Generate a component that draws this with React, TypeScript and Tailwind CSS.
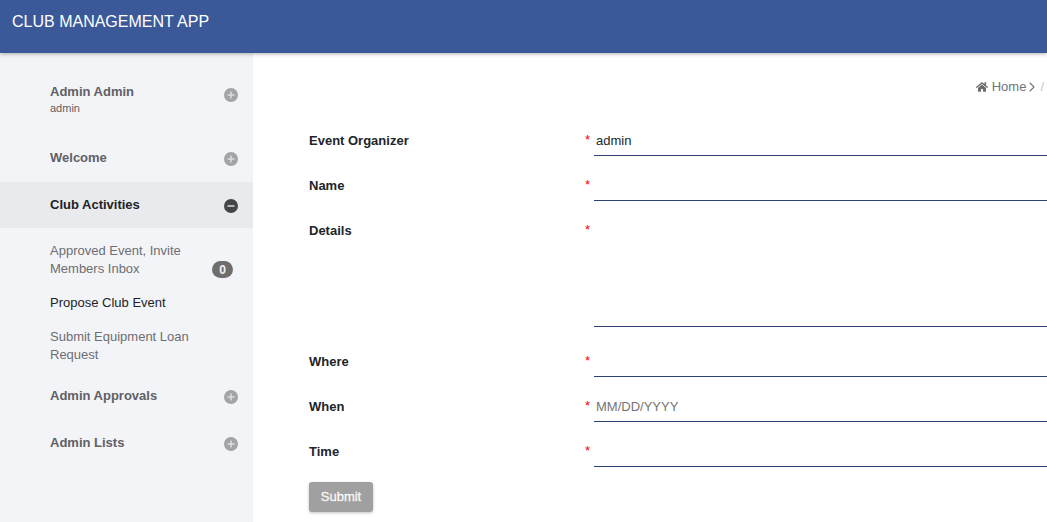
import { ChevronRight } from "lucide-react";
import { FaHome } from "react-icons/fa";

function Bullet({ open = false }: { open?: boolean }) {
  return (
    <span className={`flex h-[14px] w-[14px] shrink-0 items-center justify-center rounded-full ${open ? "bg-[#444548]" : "bg-[#a3a4a7]"}`}>
      <svg width="8" height="8" viewBox="0 0 8 8" fill="none" stroke={open ? "#f3f4f8" : "#e4e5e8"} strokeWidth="1.3">
        <path d="M0.5 4h7" />
        {!open && <path d="M4 0.5v7" />}
      </svg>
    </span>
  );
}

function Field({ label, h, value, placeholder }: { label: string; h: string; value?: string; placeholder?: string }) {
  return (
    <div className="flex">
      <div className="w-[276px] pt-[5px] text-[13px] leading-[20px] font-bold text-[#212529]">{label}</div>
      <div className="w-[9px] pt-[4px] text-[13px] leading-[20px] text-[#ff0000]">*</div>
      <div className={`flex-1 border-b border-[#2d4373] pl-[2px] pt-[5px] text-[13px] leading-[20px] ${h} ${placeholder ? "text-[#757575]" : "text-[#212529]"}`}>
        {value ?? placeholder ?? ""}
      </div>
    </div>
  );
}

export default function App() {
  return (
    <div className="flex h-[522px] w-[1047px] flex-col overflow-hidden bg-white font-['Liberation_Sans',Arial,sans-serif]">
      <header className="relative z-10 h-[53px] shrink-0 bg-[#3b5998] pl-[12px] pt-[12px] text-[16px] leading-[19px] text-white shadow-[0_1px_4px_rgba(0,0,0,0.3)]">
        CLUB MANAGEMENT APP
      </header>
      <div className="flex flex-1">
        <aside className="w-[253px] shrink-0 bg-[#f3f4f8] pt-[29px] text-[13px]">
          <div className="flex h-[47px] items-start justify-between pl-[50px] pr-[15px]">
            <div>
              <div className="pt-[1px] text-[13px] leading-[18px] font-bold text-[#5f6165]">Admin Admin</div>
              <div className="mt-[-1px] text-[11px] leading-[16px] text-[#5f6165]">admin</div>
            </div>
            <span className="mt-[6px]"><Bullet /></span>
          </div>
          <div className="flex h-[53px] items-center justify-between pl-[50px] pr-[15px] pt-[2px]">
            <span className="mt-[2px] font-bold leading-[18px] text-[#5f6165]">Welcome</span>
            <span className="mt-[5px]"><Bullet /></span>
          </div>
          <div className="flex h-[46px] items-center justify-between bg-[#e9eaee] pl-[50px] pr-[15px]">
            <span className="font-bold leading-[18px] text-[#212327]">Club Activities</span>
            <span className="mt-[1px]"><Bullet open /></span>
          </div>
          <div className="pt-[14px] leading-[18px]">
            <div className="flex items-end justify-between pl-[50px] pr-[20px]">
              <span className="text-[#6d6e72]">Approved Event, Invite<br />Members Inbox</span>
              <span className="flex h-[17px] w-[21px] items-center justify-center rounded-full bg-[#6e6e6e] text-[12px] font-bold text-[#f3f4f8]">0</span>
            </div>
            <div className="mt-[16px] pl-[50px] text-[#212327]">Propose Club Event</div>
            <div className="mt-[16px] pl-[50px] text-[#6d6e72]">Submit Equipment Loan<br />Request</div>
          </div>
          <div className="mt-[23px] flex h-[18px] items-center justify-between pl-[50px] pr-[15px]">
            <span className="font-bold text-[#5f6165]">Admin Approvals</span>
            <span className="mt-[2px]"><Bullet /></span>
          </div>
          <div className="mt-[29px] flex h-[18px] items-center justify-between pl-[50px] pr-[15px]">
            <span className="font-bold text-[#5f6165]">Admin Lists</span>
            <span className="mt-[2px]"><Bullet /></span>
          </div>
        </aside>
        <main className="flex-1 pl-[56px]">
          <div className="flex h-[73px] items-start justify-end pt-[25px] text-[13px] leading-[18px] text-[#6c757d]">
            <FaHome size={12} className="mr-[4px] mt-[3px]" color="#6c6c6c" />
            <span>Home</span>
            <ChevronRight size={16} className="ml-[-2px] mt-[1px]" strokeWidth={1.6} />
            <span className="mr-[3px] text-[#c3c8cc]">/</span>
          </div>
          <div className="flex flex-col gap-[15px]">
            <Field label="Event Organizer" h="h-[30px]" value="admin" />
            <Field label="Name" h="h-[30px]" />
            <Field label="Details" h="h-[111px]" />
          </div>
          <div className="mt-[20px] flex flex-col gap-[15px]">
            <Field label="Where" h="h-[30px]" />
            <Field label="When" h="h-[30px]" placeholder="MM/DD/YYYY" />
            <Field label="Time" h="h-[30px]" />
          </div>
          <button className="mt-[15px] h-[30px] w-[64px] rounded-[3px] bg-[#a0a0a0] text-[13px] font-normal text-[#f8f8f8] shadow-[0_1px_3px_rgba(0,0,0,0.25)] [-webkit-text-stroke:0.3px_#f8f8f8]">
            Submit
          </button>
        </main>
      </div>
    </div>
  );
}
